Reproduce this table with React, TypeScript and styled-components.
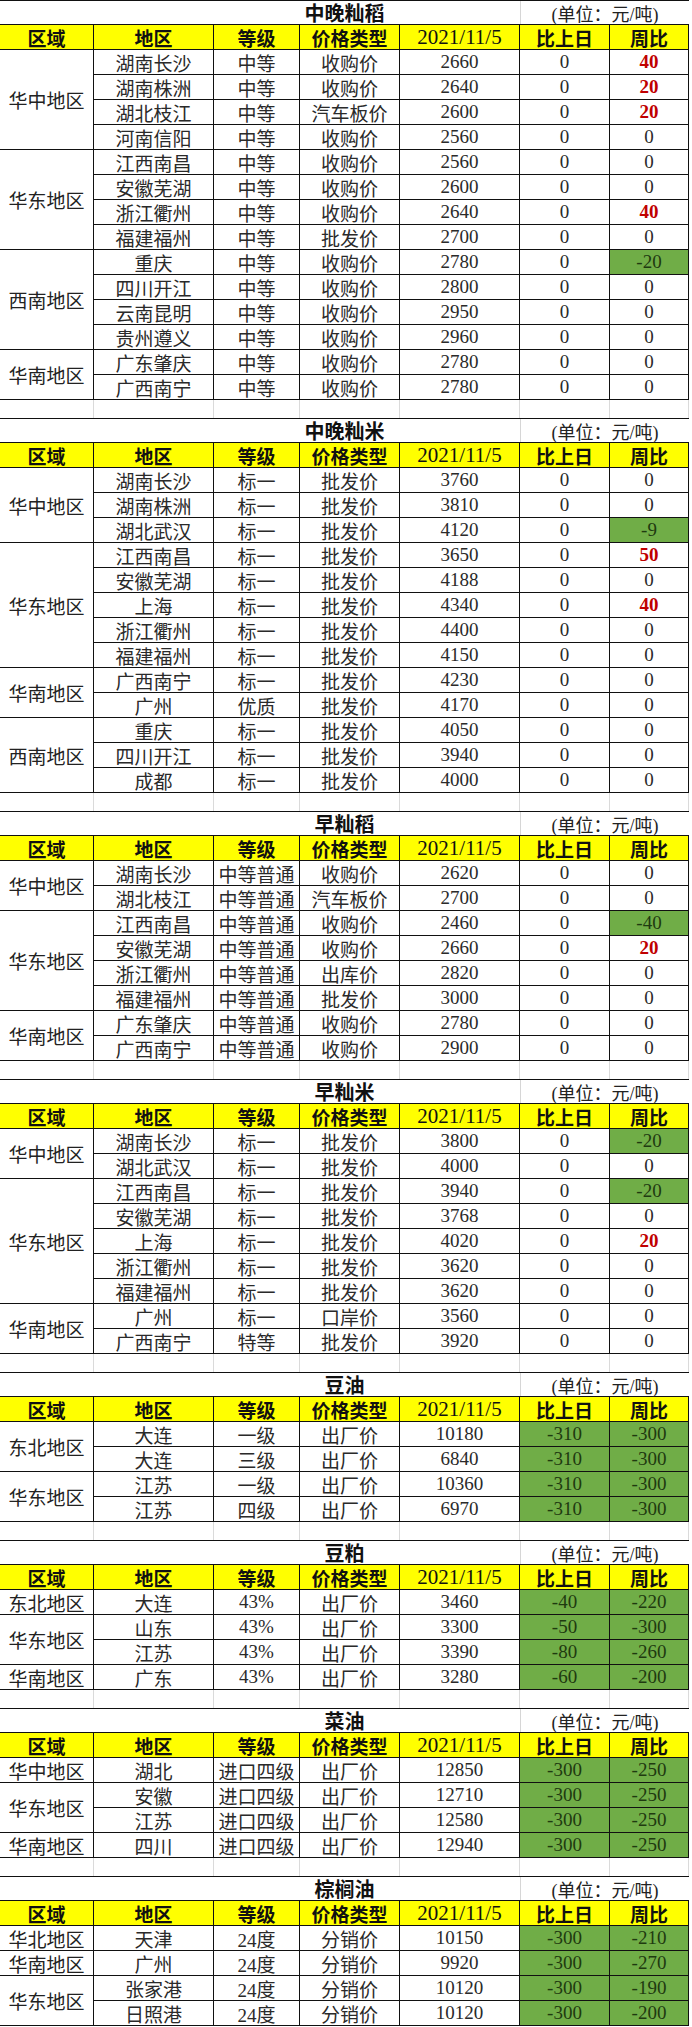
import React from "react";
import styled, { createGlobalStyle, css } from "styled-components";

const GlobalStyle = createGlobalStyle`
  html, body { margin: 0; padding: 0; background: #fff; }
  body {
    font-family: "Liberation Serif", "Noto Sans CJK SC", serif;
    color: #222;
  }
  * { box-sizing: border-box; }
`;

const COLS = "94px 120px 86px 100px 120px 90px 79px";

type Tone = "plain" | "up" | "down";
type Row = [string, string, string, string, string, string];
type Group = { region: string; rows: Row[] };
type TableData = { title: string; groups: Group[] };

const Page = styled.main`
  width: 692px;
  display: flex;
  flex-direction: column;
`;

const Sheet = styled.section`
  display: grid;
  grid-template-columns: ${COLS};
  grid-auto-rows: 25px;
  width: 689px;
`;

const TitleCell = styled.div`
  grid-column: 1 / -1;
  grid-row: 1;
  border-top: 1px solid #111;
  border-bottom: 1px solid #111;
  display: flex;
  align-items: center;
  justify-content: center;
  font-size: 20px;
  font-weight: 700;
  color: #111;
`;

const UnitCell = styled.div`
  grid-column: 6 / 8;
  grid-row: 1;
  margin: 1px 0;
  border-left: 1px solid #d6d6d6;
  display: flex;
  align-items: center;
  justify-content: center;
  font-size: 18px;
  color: #222;
`;

const HeadCell = styled.div`
  grid-row: 2;
  background: #ffff00;
  border-right: 1px solid #111;
  border-bottom: 1px solid #111;
  display: flex;
  align-items: center;
  justify-content: center;
  font-size: 19px;
  font-weight: 700;
  color: #111;
`;

const DateHead = styled(HeadCell)`
  font-weight: 400;
  font-size: 21px;
`;

const RegionCell = styled.div<{ $start: number; $span: number }>`
  grid-column: 1;
  grid-row: ${(p) => p.$start} / span ${(p) => p.$span};
  border-right: 1px solid #111;
  border-bottom: 1px solid #111;
  display: flex;
  align-items: center;
  justify-content: center;
  font-size: 19px;
`;

const Cell = styled.div<{ $tone?: Tone }>`
  border-right: 1px solid #111;
  border-bottom: 1px solid #111;
  display: flex;
  align-items: center;
  justify-content: center;
  font-size: 19px;
  color: #2a2a2a;
  ${(p) =>
    p.$tone === "up" &&
    css`
      color: #c00000;
      font-weight: 700;
    `}
  ${(p) =>
    p.$tone === "down" &&
    css`
      background: #70ad47;
      color: #1f3a10;
    `}
`;

const Spacer = styled.div`
  display: grid;
  grid-template-columns: ${COLS};
  height: 18px;
  width: 689px;
`;

const GridLine = styled.div`
  border-right: 1px solid #dadada;
`;

const HEADERS = ["区域", "地区", "等级", "价格类型", "2021/11/5", "比上日", "周比"];

const toneOf = (v: string): Tone => {
  if (v.startsWith("-")) return "down";
  if (v !== "0") return "up";
  return "plain";
};

const TABLES: TableData[] = [
  {
    title: "中晚籼稻",
    groups: [
      {
        region: "华中地区",
        rows: [
          ["湖南长沙", "中等", "收购价", "2660", "0", "40"],
          ["湖南株洲", "中等", "收购价", "2640", "0", "20"],
          ["湖北枝江", "中等", "汽车板价", "2600", "0", "20"],
          ["河南信阳", "中等", "收购价", "2560", "0", "0"],
        ],
      },
      {
        region: "华东地区",
        rows: [
          ["江西南昌", "中等", "收购价", "2560", "0", "0"],
          ["安徽芜湖", "中等", "收购价", "2600", "0", "0"],
          ["浙江衢州", "中等", "收购价", "2640", "0", "40"],
          ["福建福州", "中等", "批发价", "2700", "0", "0"],
        ],
      },
      {
        region: "西南地区",
        rows: [
          ["重庆", "中等", "收购价", "2780", "0", "-20"],
          ["四川开江", "中等", "收购价", "2800", "0", "0"],
          ["云南昆明", "中等", "收购价", "2950", "0", "0"],
          ["贵州遵义", "中等", "收购价", "2960", "0", "0"],
        ],
      },
      {
        region: "华南地区",
        rows: [
          ["广东肇庆", "中等", "收购价", "2780", "0", "0"],
          ["广西南宁", "中等", "收购价", "2780", "0", "0"],
        ],
      },
    ],
  },
  {
    title: "中晚籼米",
    groups: [
      {
        region: "华中地区",
        rows: [
          ["湖南长沙", "标一", "批发价", "3760", "0", "0"],
          ["湖南株洲", "标一", "批发价", "3810", "0", "0"],
          ["湖北武汉", "标一", "批发价", "4120", "0", "-9"],
        ],
      },
      {
        region: "华东地区",
        rows: [
          ["江西南昌", "标一", "批发价", "3650", "0", "50"],
          ["安徽芜湖", "标一", "批发价", "4188", "0", "0"],
          ["上海", "标一", "批发价", "4340", "0", "40"],
          ["浙江衢州", "标一", "批发价", "4400", "0", "0"],
          ["福建福州", "标一", "批发价", "4150", "0", "0"],
        ],
      },
      {
        region: "华南地区",
        rows: [
          ["广西南宁", "标一", "批发价", "4230", "0", "0"],
          ["广州", "优质", "批发价", "4170", "0", "0"],
        ],
      },
      {
        region: "西南地区",
        rows: [
          ["重庆", "标一", "批发价", "4050", "0", "0"],
          ["四川开江", "标一", "批发价", "3940", "0", "0"],
          ["成都", "标一", "批发价", "4000", "0", "0"],
        ],
      },
    ],
  },
  {
    title: "早籼稻",
    groups: [
      {
        region: "华中地区",
        rows: [
          ["湖南长沙", "中等普通", "收购价", "2620", "0", "0"],
          ["湖北枝江", "中等普通", "汽车板价", "2700", "0", "0"],
        ],
      },
      {
        region: "华东地区",
        rows: [
          ["江西南昌", "中等普通", "收购价", "2460", "0", "-40"],
          ["安徽芜湖", "中等普通", "收购价", "2660", "0", "20"],
          ["浙江衢州", "中等普通", "出库价", "2820", "0", "0"],
          ["福建福州", "中等普通", "批发价", "3000", "0", "0"],
        ],
      },
      {
        region: "华南地区",
        rows: [
          ["广东肇庆", "中等普通", "收购价", "2780", "0", "0"],
          ["广西南宁", "中等普通", "收购价", "2900", "0", "0"],
        ],
      },
    ],
  },
  {
    title: "早籼米",
    groups: [
      {
        region: "华中地区",
        rows: [
          ["湖南长沙", "标一", "批发价", "3800", "0", "-20"],
          ["湖北武汉", "标一", "批发价", "4000", "0", "0"],
        ],
      },
      {
        region: "华东地区",
        rows: [
          ["江西南昌", "标一", "批发价", "3940", "0", "-20"],
          ["安徽芜湖", "标一", "批发价", "3768", "0", "0"],
          ["上海", "标一", "批发价", "4020", "0", "20"],
          ["浙江衢州", "标一", "批发价", "3620", "0", "0"],
          ["福建福州", "标一", "批发价", "3620", "0", "0"],
        ],
      },
      {
        region: "华南地区",
        rows: [
          ["广州", "标一", "口岸价", "3560", "0", "0"],
          ["广西南宁", "特等", "批发价", "3920", "0", "0"],
        ],
      },
    ],
  },
  {
    title: "豆油",
    groups: [
      {
        region: "东北地区",
        rows: [
          ["大连", "一级", "出厂价", "10180", "-310", "-300"],
          ["大连", "三级", "出厂价", "6840", "-310", "-300"],
        ],
      },
      {
        region: "华东地区",
        rows: [
          ["江苏", "一级", "出厂价", "10360", "-310", "-300"],
          ["江苏", "四级", "出厂价", "6970", "-310", "-300"],
        ],
      },
    ],
  },
  {
    title: "豆粕",
    groups: [
      { region: "东北地区", rows: [["大连", "43%", "出厂价", "3460", "-40", "-220"]] },
      {
        region: "华东地区",
        rows: [
          ["山东", "43%", "出厂价", "3300", "-50", "-300"],
          ["江苏", "43%", "出厂价", "3390", "-80", "-260"],
        ],
      },
      { region: "华南地区", rows: [["广东", "43%", "出厂价", "3280", "-60", "-200"]] },
    ],
  },
  {
    title: "菜油",
    groups: [
      { region: "华中地区", rows: [["湖北", "进口四级", "出厂价", "12850", "-300", "-250"]] },
      {
        region: "华东地区",
        rows: [
          ["安徽", "进口四级", "出厂价", "12710", "-300", "-250"],
          ["江苏", "进口四级", "出厂价", "12580", "-300", "-250"],
        ],
      },
      { region: "华南地区", rows: [["四川", "进口四级", "出厂价", "12940", "-300", "-250"]] },
    ],
  },
  {
    title: "棕榈油",
    groups: [
      { region: "华北地区", rows: [["天津", "24度", "分销价", "10150", "-300", "-210"]] },
      { region: "华南地区", rows: [["广州", "24度", "分销价", "9920", "-300", "-270"]] },
      {
        region: "华东地区",
        rows: [
          ["张家港", "24度", "分销价", "10120", "-300", "-190"],
          ["日照港", "24度", "分销价", "10120", "-300", "-200"],
        ],
      },
    ],
  },
];

function PriceTable({ data }: { data: TableData }) {
  let rowCursor = 3;
  return (
    <Sheet>
      <TitleCell>{data.title}</TitleCell>
      <UnitCell>(单位：元/吨)</UnitCell>
      {HEADERS.map((h, i) =>
        i === 4 ? <DateHead key={h}>{h}</DateHead> : <HeadCell key={h}>{h}</HeadCell>
      )}
      {data.groups.map((g) => {
        const start = rowCursor;
        rowCursor += g.rows.length;
        return (
          <React.Fragment key={g.region + start}>
            <RegionCell $start={start} $span={g.rows.length}>
              {g.region}
            </RegionCell>
            {g.rows.map((r, ri) =>
              r.map((v, ci) => (
                <Cell key={`${ri}-${ci}`} $tone={ci >= 4 ? toneOf(v) : "plain"}>
                  {v}
                </Cell>
              ))
            )}
          </React.Fragment>
        );
      })}
    </Sheet>
  );
}

function Gap() {
  return (
    <Spacer>
      {HEADERS.map((h) => (
        <GridLine key={h} />
      ))}
    </Spacer>
  );
}

export default function App() {
  return (
    <Page>
      <GlobalStyle />
      {TABLES.map((t, i) => (
        <React.Fragment key={t.title}>
          {i > 0 && <Gap />}
          <PriceTable data={t} />
        </React.Fragment>
      ))}
    </Page>
  );
}
